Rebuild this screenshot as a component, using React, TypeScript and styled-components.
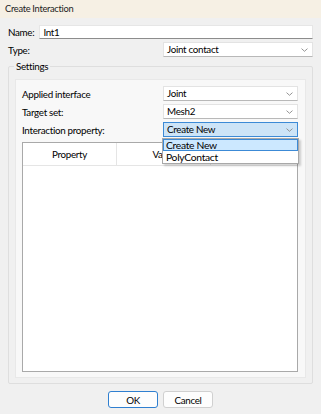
import { createGlobalStyle } from 'styled-components';
import styled from 'styled-components';

const GlobalStyle = createGlobalStyle`
	html, body {
		margin: 0;
		padding: 0;
		background: #f0f0f0;
	}
	body {
		font-family: Lato, 'Noto Sans', sans-serif;
		font-size: 9.8px;
		letter-spacing: -0.3px;
		color: #000;
	}
`;

function Chevron() {
	return (
		<svg width="7" height="4" viewBox="0 0 7 4">
			<path d="M0.5 0.6 L3.5 3.3 L6.5 0.6" fill="none" stroke="#8a8a8a" strokeWidth="0.9" />
		</svg>
	);
}

interface SelectProps {
	value: string;
	active?: boolean;
	width: number;
}

function Select({ value, active, width }: SelectProps) {
	return (
		<SelectBox $active={active} $width={width}>
			<span>{value}</span>
			<Chevron />
		</SelectBox>
	);
}

export default function App() {
	return (
		<>
			<GlobalStyle />
			<Window>
				<TitleBar>Create Interaction</TitleBar>
				<Body>
					<NameRow>
						<Label>Name:</Label>
						<TextInput>Int1</TextInput>
					</NameRow>
					<FieldRow>
						<Label>Type:</Label>
						<Select value="Joint contact" width={150} />
					</FieldRow>
					<Group>
						<Legend>Settings</Legend>
						<Panel>
							<FieldRow>
								<Label>Applied interface</Label>
								<Select value="Joint" width={135} />
							</FieldRow>
							<FieldRow>
								<Label>Target set:</Label>
								<Select value="Mesh2" width={135} />
							</FieldRow>
							<FieldRow>
								<Label>Interaction property:</Label>
								<Select value="Create New" width={135} active />
								<DropList>
									<DropItem $selected>Create New</DropItem>
									<DropItem>PolyContact</DropItem>
								</DropList>
							</FieldRow>
							<Table>
								<HeaderRow>
									<HeaderCell $width={93}>Property</HeaderCell>
									<HeaderCell $width={93}>Value</HeaderCell>
									<HeaderFiller />
								</HeaderRow>
							</Table>
						</Panel>
					</Group>
					<ButtonBar>
						<Button $primary>OK</Button>
						<Button>Cancel</Button>
					</ButtonBar>
				</Body>
			</Window>
		</>
	);
}

const Window = styled.div`
	width: 321px;
	height: 414px;
	display: flex;
	flex-direction: column;
	background: #f0f0f0;
	overflow: hidden;
`;

const TitleBar = styled.div`
	height: 18px;
	line-height: 17px;
	padding-left: 5px;
	background: #f6f0e4;
	font-size: 9.3px;
	color: #222;
`;

const Body = styled.div`
	flex: 1;
	display: flex;
	flex-direction: column;
	padding: 7px 8px 0 8px;
`;

const NameRow = styled.div`
	display: flex;
	align-items: center;
	height: 14px;
	gap: 5px;
	margin-bottom: 3px;
`;

const FieldRow = styled.div`
	position: relative;
	display: flex;
	align-items: center;
	justify-content: space-between;
	height: 15px;
	margin-bottom: 3px;
`;

const Label = styled.span`
	white-space: nowrap;
	line-height: 14px;
`;

const TextInput = styled.div`
	flex: 1;
	height: 14px;
	line-height: 13px;
	padding-left: 3px;
	background: #ffffff;
	border: 1px solid #e6e6e6;
	border-bottom-color: #8c8c8c;
	box-sizing: border-box;
`;

const SelectBox = styled.div<{ $active?: boolean; $width: number }>`
	width: ${({ $width }) => $width}px;
	height: 15px;
	box-sizing: border-box;
	display: flex;
	align-items: center;
	justify-content: space-between;
	padding: 0 4px 0 3px;
	background: ${({ $active }) => ($active ? '#cde4f7' : '#ffffff')};
	border: 1px solid ${({ $active }) => ($active ? '#3c8ad6' : '#e3e3e3')};
	border-bottom-color: ${({ $active }) => ($active ? '#3c8ad6' : '#b8b8b8')};
	line-height: 13px;
`;

const Group = styled.div`
	position: relative;
	margin-top: 6px;
	height: 318px;
	border: 1px solid #dedede;
	border-radius: 2px;
	padding: 12px 6px 5px 6px;
	box-sizing: border-box;
`;

const Legend = styled.span`
	position: absolute;
	top: -7px;
	left: 5px;
	padding: 0 2px;
	background: #f0f0f0;
	line-height: 12px;
`;

const Panel = styled.div`
	height: 100%;
	box-sizing: border-box;
	background: #f8f8f8;
	border: 1px solid #e8e8e8;
	padding: 6px 7px 5px 6px;
	display: flex;
	flex-direction: column;
`;

const DropList = styled.div`
	position: absolute;
	top: 16px;
	right: -1px;
	width: 137px;
	box-sizing: border-box;
	background: #ffffff;
	border: 1px solid #a8a8a8;
	box-shadow: 2px 2px 2px rgba(0, 0, 0, 0.18);
	z-index: 5;
`;

const DropItem = styled.div<{ $selected?: boolean }>`
	height: 12px;
	line-height: 11px;
	padding-left: 2px;
	font-size: 10.3px;
	box-sizing: border-box;
	background: ${({ $selected }) => ($selected ? '#cce8ff' : '#ffffff')};
	border: 1px solid ${({ $selected }) => ($selected ? '#3c8ad6' : 'transparent')};
`;

const Table = styled.div`
	flex: 1;
	margin-top: 2px;
	background: #ffffff;
	border: 1px solid #a9a9a9;
	display: flex;
	flex-direction: column;
`;

const HeaderRow = styled.div`
	display: flex;
	height: 22px;
	border-bottom: 1px solid #e5e5e5;
`;

const HeaderCell = styled.div<{ $width: number }>`
	width: ${({ $width }) => $width}px;
	display: flex;
	align-items: center;
	justify-content: center;
	border-right: 1px solid #e5e5e5;
`;

const HeaderFiller = styled.div`
	flex: 1;
`;

const ButtonBar = styled.div`
	display: flex;
	justify-content: center;
	gap: 5px;
	margin-top: 7px;
`;

const Button = styled.button<{ $primary?: boolean }>`
	width: 50px;
	height: 17px;
	padding: 0;
	font-family: inherit;
	font-size: 9.8px;
	letter-spacing: -0.3px;
	line-height: 14px;
	color: #000;
	background: #fdfdfd;
	border: 1px solid ${({ $primary }) => ($primary ? '#2f7fd0' : '#d0d0d0')};
	border-radius: 3px;
`;
